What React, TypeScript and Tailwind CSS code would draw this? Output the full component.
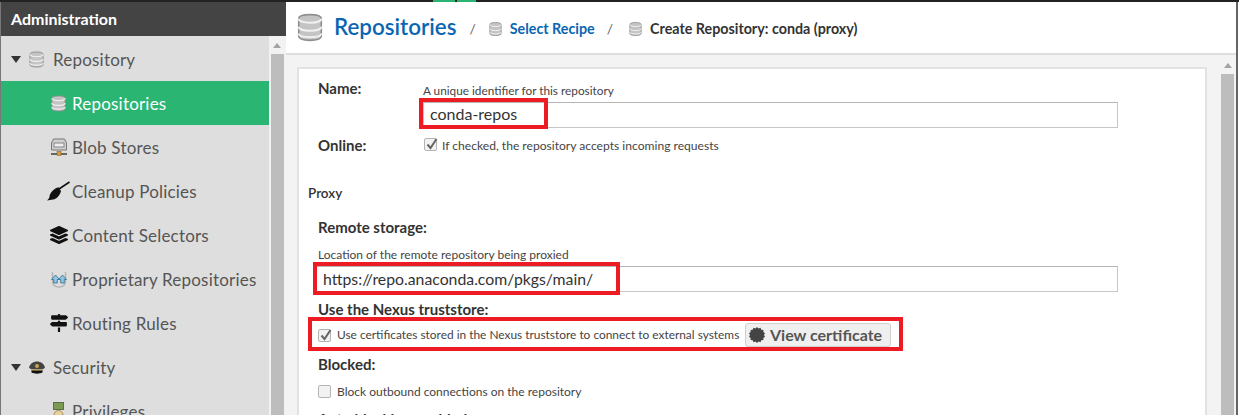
import { FaLayerGroup, FaMapSigns } from 'react-icons/fa';

function DbIcon({ className }: { className: string }) {
  return (
    <svg className={className} viewBox="0 0 16 18">
      <path d="M1 3.500C1 1.800 4 1 8 1s7 .8 7 2.500v11c0 1.700-3 2.500-7 2.500s-7-.8-7-2.500z" fill="#c4c4c4" stroke="#8f8f8f" strokeWidth="1" />
      <path d="M1 3.500C1 5 4 6 8 6s7-1 7-2.500M1 8.500C1 10 4 11 8 11s7-1 7-2.500M1 12.800c0 1.400 3 2.200 7 2.200s7-.8 7-2.200" fill="none" stroke="#f2f2f2" strokeWidth="1.200" />
    </svg>
  );
}

function BlobIcon() {
  return (
    <svg className="w-4 h-[19px]" viewBox="0 0 16 19">
      <path d="M2.500 1h11l2 4v7H.5V5z" fill="#cfcfcf" stroke="#777" />
      <rect x="3" y="5" width="10" height="4" fill="#eee" stroke="#888" />
      <rect x="0" y="15" width="16" height="2" fill="#666" />
      <rect x="6" y="13.500" width="4" height="4" fill="#d59a3a" stroke="#7a5a20" strokeWidth=".5" />
    </svg>
  );
}

function BroomIcon() {
  return (
    <svg className="w-[23px] h-5" viewBox="0 0 23 20">
      <path d="M22.500 1 12 8" stroke="#111" strokeWidth="1.600" fill="none" />
      <path d="M11.500 6.200 14 10c-1 4-4 8-8 8.500-2 .3-4 .6-6 1 1.500-1.200 2.500-2.500 2.500-4C3 11 7.500 7.500 11.500 6.200z" fill="#111" />
    </svg>
  );
}

function ProprietaryIcon() {
  return (
    <svg className="w-4 h-[17px]" viewBox="0 0 16 17">
      <path d="M1.500 1v9c0 4 2.500 6 6.500 6s6.500-2 6.500-6V1" fill="none" stroke="#b5b5b5" strokeWidth="1.500" />
      <path d="M4.500 4 .5 8.500h2.200v3.500h3.600V8.500h2.200zM11.500 4 7.500 8.500h2.200v3.500h3.600V8.500h2.200z" fill="#8fc6e4" stroke="#2f6f8f" strokeWidth=".8" />
    </svg>
  );
}

function HatIcon() {
  return (
    <svg className="w-4 h-[13px]" viewBox="0 0 16 13">
      <path d="M0 6.500C1 2.500 4.500.5 8 .5s7 2 8 6c-1 1.500-3 2-3.500 2h-9C3 8.500 1 8 0 6.500z" fill="#444" />
      <circle cx="8" cy="5" r="2" fill="#c9a24d" />
      <path d="M2.500 9h11v2.500c-3 1.500-8 1.500-11 0z" fill="#111" />
      <rect x="3" y="8.500" width="10" height="1" fill="#d9b25c" />
    </svg>
  );
}

function MedalIcon() {
  return (
    <svg className="w-[11px] h-[19px]" viewBox="0 0 11 19">
      <rect x="0.500" y="0.500" width="10" height="7" fill="#7d9a55" stroke="#5a7040" />
      <circle cx="5.500" cy="13" r="4.500" fill="#e8d3a0" stroke="#a98d52" />
    </svg>
  );
}

function Caret() {
  return <span className="w-0 h-0 border-x-[5px] border-x-transparent border-t-[7px] border-t-[#333] shrink-0" />;
}

function Checkbox({ checked }: { checked?: boolean }) {
  return (
    <span className="relative w-[13px] h-[13px] shrink-0 rounded-[2px] border border-[#b4b4b4] bg-[#f2f2f2]">
      {checked && (
        <svg className="absolute left-0 -top-[2px] w-[14px] h-[14px]" viewBox="0 0 14 14">
          <path d="M2.500 7.500 5.500 11 11.500 2" fill="none" stroke="#666" strokeWidth="2" />
        </svg>
      )}
    </span>
  );
}

function Scrollbar({ className }: { className: string }) {
  return (
    <div className={`flex flex-col items-center shrink-0 ${className}`}>
      <div className="h-[18px] flex items-center justify-center shrink-0">
        <span className="w-0 h-0 border-x-[4px] border-x-transparent border-b-[5px] border-b-[#a3a3a3]" />
      </div>
      <div className="flex-1 w-[13px] bg-[#bdbdbd]" />
    </div>
  );
}

const navItems = [
  { label: 'Repository', icon: <DbIcon className="w-[15px] h-[17px]" />, parent: true },
  { label: 'Repositories', icon: <DbIcon className="w-[15px] h-[17px]" />, active: true },
  { label: 'Blob Stores', icon: <BlobIcon /> },
  { label: 'Cleanup Policies', icon: <BroomIcon /> },
  { label: 'Content Selectors', icon: <FaLayerGroup className="w-[18px] h-[18px] text-[#111]" /> },
  { label: 'Proprietary Repositories', icon: <ProprietaryIcon /> },
  { label: 'Routing Rules', icon: <FaMapSigns className="w-[18px] h-[18px] text-[#111]" /> },
  { label: 'Security', icon: <HatIcon />, parent: true },
  { label: 'Privileges', icon: <MedalIcon /> },
];

function Sidebar() {
  return (
    <aside className="w-[286px] shrink-0 flex flex-col border-l border-l-[#777] h-full">
      <div className="h-[34px] bg-[#444] shrink-0 flex items-center px-[10px] text-white text-[16px] font-bold">Administration</div>
      <div className="flex-1 flex min-h-0">
        <nav className="w-[268px] bg-[#dedede] overflow-hidden">
          {navItems.map((item) => (
            <div
              key={item.label}
              className={`h-[44px] first:mt-[1px] flex items-center text-[17px] tracking-[0.2px] ${item.active ? 'bg-[#2ab573] text-white' : 'text-[#555]'}`}
            >
              {item.parent ? (
                <div className="flex items-center w-[52px] pl-[10px] shrink-0">
                  <Caret />
                  <div className="w-[31px] flex justify-center">{item.icon}</div>
                </div>
              ) : (
                <div className="w-[71px] pl-[46px] pr-[2px] shrink-0 flex justify-center">{item.icon}</div>
              )}
              <span className="whitespace-nowrap pt-[1px]">{item.label}</span>
            </div>
          ))}
        </nav>
        <Scrollbar className="w-[17px] bg-[#f2f2f2] pr-[1px]" />
      </div>
    </aside>
  );
}

function Crumbs() {
  return (
    <header className="h-[53px] shrink-0 bg-white border-b-2 border-b-[#dedede] flex items-center pl-[11px] pb-[1px]">
      <DbIcon className="w-[26px] h-[29px]" />
      <h1 className="ml-[11px] text-[22.400px] font-semibold text-[#0b66b2] leading-none">Repositories</h1>
      <span className="ml-[13px] mt-[3px] text-[#666] text-[14px]">/</span>
      <DbIcon className="ml-[13px] mt-[3px] w-[13px] h-[16px]" />
      <span className="ml-[8px] mt-[3px] text-[14.300px] font-bold text-[#0b66b2]">Select Recipe</span>
      <span className="ml-[12px] mt-[3px] text-[#666] text-[14px]">/</span>
      <DbIcon className="ml-[16px] mt-[3px] w-[13px] h-[16px]" />
      <span className="ml-[8px] mt-[3px] text-[14.300px] font-bold text-[#333]">Create Repository: conda (proxy)</span>
    </header>
  );
}

function Heading({ children, className }: { children: string; className: string }) {
  return <div className={`text-[15px] font-bold text-[#333] leading-none ${className}`}>{children}</div>;
}

function RedBox({ className }: { className: string }) {
  return <div className={`absolute border-[4px] border-[#ed1c24] pointer-events-none ${className}`} />;
}

function Form() {
  return (
    <div className="w-[910px] h-[400px] bg-white border-2 border-[#e2e2e2] border-b-0 text-[#444] shrink-0">
      <div className="pl-[19px] pt-[12px] flex">
        <div className="w-[105px] text-[15px] font-bold text-[#333] leading-none">Name:</div>
        <div className="w-[695px]">
          <div className="text-[11.800px] leading-none pt-[4px]">A unique identifier for this repository</div>
          <div className="relative mt-[5px] h-[26px] border border-[#c6c6c6] border-t-[#b5b5b5] pl-[6px] pb-[1px] flex items-center text-[16px] text-[#333]">
            conda-repos
            <RedBox className="-left-[5px] -top-[5px] w-[129px] h-[31px]" />
          </div>
        </div>
      </div>
      <div className="pl-[19px] pt-[10px] flex items-start">
        <div className="w-[106px] text-[15px] font-bold text-[#333] leading-none">Online:</div>
        <div className="flex items-start gap-[5px] text-[12.100px] leading-none">
          <Checkbox checked />
          <span className="pt-[2px]">If checked, the repository accepts incoming requests</span>
        </div>
      </div>
      <div className="pl-[9px] pt-[34px] text-[13.500px] font-semibold text-[#333] leading-none">Proxy</div>
      <Heading className="pl-[19px] pt-[20px]">Remote storage:</Heading>
      <div className="pl-[19px] pt-[14px] text-[12px] leading-none">Location of the remote repository being proxied</div>
      <div className="relative ml-[17px] mt-[5px] w-[802px] h-[26px] border border-[#c6c6c6] border-t-[#b5b5b5] pl-[6px] flex items-center text-[15.800px] text-[#333]">
        https://repo.anaconda.com/pkgs/main/
        <RedBox className="-left-[4px] -top-[5px] w-[307px] h-[33px]" />
      </div>
      <Heading className="pl-[19px] pt-[10px]">Use the Nexus truststore:</Heading>
      <div className="relative ml-[19px] mt-[6px] h-[24px] flex items-center text-[11.900px] leading-none">
        <Checkbox checked />
        <span className="ml-[6px] w-[408px] whitespace-nowrap">Use certificates stored in the Nexus truststore to connect to external systems</span>
        <button className="w-[146px] h-[24px] flex items-center pl-[3px] gap-[5px] bg-[#efefef] border border-[#d0d0d0] rounded-[3px] text-[16px] font-bold text-[#555]">
          <svg className="w-4 h-4" viewBox="0 0 16 16">
            <path d="M8 0l1.500 1.600L11.500.8l.8 2 2.100.1v2.100l1.600 1.300L15 8l1 1.700-1.600 1.300v2.100l-2.100.1-.8 2-2-.8L8 16l-1.500-1.600-2 .8-.8-2-2.100-.1v-2.100L0 9.700 1 8 0 6.300l1.600-1.300V2.900l2.100-.1.8-2 2 .8z" fill="#444" />
          </svg>
          View certificate
        </button>
        <RedBox className="-left-[10px] -top-[6px] w-[595px] h-[34px]" />
      </div>
      <Heading className="pl-[19px] pt-[10px]">Blocked:</Heading>
      <div className="pl-[19px] pt-[13px] flex items-center text-[12px] leading-none">
        <Checkbox />
        <span className="ml-[6px]">Block outbound connections on the repository</span>
      </div>
      <Heading className="pl-[19px] pt-[14px]">Auto blocking enabled:</Heading>
    </div>
  );
}

export default function App() {
  return (
    <div className="w-[1239px] h-[415px] overflow-hidden bg-white flex flex-col font-['Lato','Noto_Sans',sans-serif]">
      <div className="h-[2px] shrink-0 bg-[#222] flex">
        <span className="ml-[433px] w-[22px] bg-[#2ab573]" />
        <span className="ml-[2px] w-[19px] bg-[#2ab573]" />
      </div>
      <div className="flex-1 flex min-h-0">
        <Sidebar />
        <main className="w-[950px] shrink-0 flex flex-col min-h-0">
          <Crumbs />
          <div className="flex-1 min-h-0 bg-[#f3f3f3] flex overflow-hidden">
            <div className="flex-1 pl-[11px] pt-[12px] min-w-0">
              <Form />
            </div>
            <Scrollbar className="w-[15px] mr-[1px] pt-[1px]" />
          </div>
        </main>
        <div className="w-[2px] bg-[#666]" />
      </div>
    </div>
  );
}
